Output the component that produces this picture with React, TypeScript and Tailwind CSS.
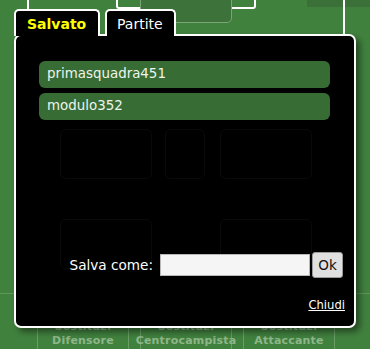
import React from "react";

export default function App() {
  const font = "font-['DejaVu_Sans','Verdana',sans-serif]";
  return (
    <div className={`relative w-[370px] h-[349px] overflow-hidden bg-[#41813e] ${font}`}>
      {/* field: top */}
      <div className="absolute left-[27px] top-0 w-[2px] h-[40px] bg-white" />
      <div className="absolute left-[116px] top-[-4px] w-[140px] h-[13px] border-2 border-white rounded-b-[3px]" />
      <div className="absolute left-[140px] top-[-4px] w-[92px] h-[27px] border border-[#7aa577] bg-[#3e723b] rounded-b-[5px]" />
      <div className="absolute left-[307px] top-0 w-[63px] h-[7px] bg-[#3b7038]" />
      <div className="absolute left-[343px] top-0 w-[2px] h-[60px] bg-white" />
      {/* field: bottom */}
      <div className="absolute left-0 top-[293px] w-[370px] h-[1px] bg-[#5d9a5a]" />
      <div className="absolute left-0 top-[313px] w-[370px] flex gap-[11px] pl-[37px]">
        {["Difensore", "Centrocampista", "Attaccante"].map((t) => (
          <div
            key={t}
            className="w-[92px] h-[60px] border-x border-[#6a9e66] flex flex-col items-center pt-[7px] text-[11px] font-bold leading-[14px] text-[#8db689] tracking-[0.2px]"
          >
            <span>Sostituz.</span>
            <span>{t}</span>
          </div>
        ))}
      </div>

      {/* dialog */}
      <div className="absolute left-[14px] top-[9px] w-[342px] flex flex-col">
        <div className="flex gap-[5px] relative z-10 -mb-[2px]">
          <div className="w-[86px] h-[27px] bg-black border-2 border-b-0 border-white rounded-t-[5px] flex items-center pl-[11px] text-[14px] font-bold text-[#ffff00] pt-[2px]">
            Salvato
          </div>
          <div className="w-[71px] h-[27px] bg-black border-2 border-b-0 border-white rounded-t-[5px] flex items-center pl-[10px] text-[14px] text-white pt-[2px]">
            Partite
          </div>
        </div>
        <div className="relative h-[294px] bg-black border-2 border-white rounded-[7px] shadow-[4px_4px_6px_rgba(0,0,0,0.45)] flex flex-col pt-[25px] pl-[23px] pr-[24px]">
          {/* faint shapes showing through */}
          <div className="absolute left-[44px] top-[93px] w-[92px] h-[50px] border border-[#070c07] rounded-[6px]" />
          <div className="absolute left-[149px] top-[93px] w-[40px] h-[50px] border border-[#070c07] rounded-[6px]" />
          <div className="absolute left-[204px] top-[93px] w-[92px] h-[50px] border border-[#070c07] rounded-[6px]" />
          <div className="absolute left-[44px] top-[183px] w-[92px] h-[50px] border border-[#070c07] rounded-[6px]" />
          <div className="absolute left-[204px] top-[183px] w-[92px] h-[50px] border border-[#070c07] rounded-[6px]" />
          <div className="flex flex-col gap-[5px] relative">
            {["primasquadra451", "modulo352"].map((n) => (
              <div
                key={n}
                className="h-[27px] rounded-[6px] bg-[#376d34] text-[#eef4ee] text-[13.4px] flex items-center pl-[8px]"
              >
                {n}
              </div>
            ))}
          </div>
          <div className="flex items-center justify-end mt-[132px] -mr-[13px] relative">
            <span className="text-[13.6px] text-white mr-[7px]">Salva come:</span>
            <input
              className="w-[150px] h-[22px] bg-[#f5f5f5] border border-[#b8b8b8] outline-none px-1 text-[13px]"
              defaultValue=""
            />
            <button className="ml-[2px] w-[31px] h-[26px] rounded-[3px] bg-[#e0e0e0] border border-[#9a9a9a] text-[13.5px] text-[#111]">
              Ok
            </button>
          </div>
          <div className="flex justify-end mt-[19px] -mr-[15px] relative">
            <span className="text-[11.6px] text-white underline">Chiudi</span>
          </div>
        </div>
      </div>
    </div>
  );
}
